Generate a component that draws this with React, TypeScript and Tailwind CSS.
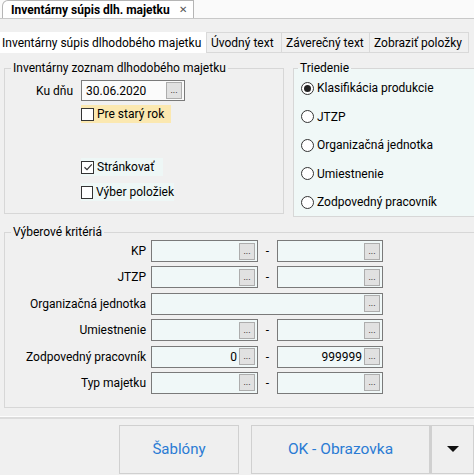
import React from 'react';

const font = { fontFamily: 'Roboto, "Noto Sans", "Liberation Sans", sans-serif' };

const Dots = () => (
    <span className="flex h-[17px] w-[16px] shrink-0 items-end justify-center border border-[#adadad] bg-[#e1e1e1] pb-[3px] text-[9px] leading-none text-black">
        ...
    </span>
);

const Field = ({ width, value, dots = true }: { width: string; value?: string; dots?: boolean }) => (
    <div className={`flex h-[22px] shrink-0 items-center gap-[2px] border border-[#7a7a7a] bg-[#f0f8f8] pl-[4px] pr-[2px] ${width}`}>
        <span className="flex-1 text-right">{value}</span>
        {dots && <Dots />}
    </div>
);

const Check = ({ label, checked, className }: { label: string; checked?: boolean; className: string }) => (
    <div className={`flex h-[18px] items-center gap-[3px] ${className}`}>
        <span className="flex h-[13px] w-[13px] items-center justify-center border border-[#333] bg-white">
            {checked && (
                <svg width="10" height="10" viewBox="0 0 10 10">
                    <path d="M1.5 5.2 L4 7.6 L8.8 2.4" fill="none" stroke="#333" strokeWidth="1.2" />
                </svg>
            )}
        </span>
        <span>{label}</span>
    </div>
);

const Radio = ({ label, checked }: { label: string; checked?: boolean }) => (
    <div className="flex h-[28.5px] items-center gap-[3px]">
        <span className="flex h-[13px] w-[13px] items-center justify-center rounded-full border border-[#333] bg-white">
            {checked && <span className="h-[7px] w-[7px] rounded-full bg-[#222]" />}
        </span>
        <span>{label}</span>
    </div>
);

const rows: { label: string; from?: string; to?: string; wide?: boolean }[] = [
    { label: 'KP' },
    { label: 'JTZP' },
    { label: 'Organizačná jednotka', wide: true },
    { label: 'Umiestnenie' },
    { label: 'Zodpovedný pracovník', from: '0', to: '999999' },
    { label: 'Typ majetku' },
];

export default function App() {
    return (
        <div className="h-[475px] w-[474px] overflow-hidden whitespace-nowrap bg-[#f0f0f0] text-[12px] text-black" style={font}>
            <div className="flex h-[19px] items-end border-b border-[#c8c8c8] bg-[#fafafa]">
                <div className="ml-[2px] flex h-[18px] w-[192px] items-center gap-[9px] rounded-tl-[6px] border-t border-r border-l border-[#b5b5b5] bg-white pl-[8px]">
                    <span className="font-bold">Inventárny súpis dlh. majetku</span>
                    <span className="text-[10px] text-[#555]">✕</span>
                </div>
            </div>

            <div className="mt-[13px] flex h-[21px]">
                <div className="flex w-[206px] items-center bg-white pl-[2px]">Inventárny súpis dlhodobého majetku</div>
                <div className="flex w-[76px] items-center border border-[#d9d9d9] pl-[4px]">Úvodný text</div>
                <div className="flex w-[88px] items-center border-y border-r border-[#d9d9d9] pl-[4px]">Záverečný text</div>
                <div className="flex w-[99px] items-center border-y border-r border-[#d9d9d9] pl-[4px]">Zobraziť položky</div>
            </div>

            <div className="mt-[8px] flex gap-[9px] pl-[4px]">
                <fieldset className="h-[153px] w-[280px] shrink-0 border border-[#d7d7d7] pt-[5px]">
                    <legend className="ml-[6px] px-[2px] leading-[14px]">Inventárny zoznam dlhodobého majetku</legend>
                    <div className="pl-[76px]">
                        <div className="flex items-center">
                            <span className="-ml-[45px] w-[45px]">Ku dňu</span>
                            <div className="flex h-[21px] w-[104px] items-center border border-[#7a7a7a] bg-[#fbfbfb] pl-[4px] pr-[2px]">
                                <span className="flex-1">30.06.2020</span>
                                <Dots />
                            </div>
                        </div>
                        <Check label="Pre starý rok" className="mt-[4px] w-[90px] bg-[#fbe8b0]" />
                        <Check label="Stránkovať" checked className="mt-[35px] w-[82px] bg-[#eef7f6]" />
                        <Check label="Výber položiek" className="mt-[7px] w-[93px] bg-[#eef7f6]" />
                    </div>
                </fieldset>

                <fieldset className="h-[156px] w-[200px] shrink-0 border border-[#d7d7d7] bg-[#f0f8f7]">
                    <legend className="ml-[4px] px-[2px] leading-[14px]">Triedenie</legend>
                    <div className="-mt-[1px] flex flex-col pl-[7px]">
                        <Radio label="Klasifikácia produkcie" checked />
                        <Radio label="JTZP" />
                        <Radio label="Organizačná jednotka" />
                        <Radio label="Umiestnenie" />
                        <Radio label="Zodpovedný pracovník" />
                    </div>
                </fieldset>
            </div>

            <fieldset className="mt-[8px] ml-[4px] h-[183px] w-[480px] border border-[#d7d7d7] pt-[1px]">
                <legend className="ml-[6px] px-[2px] leading-[14px]">Výberové kritériá</legend>
                <div className="flex flex-col gap-[4.4px]">
                    {rows.map((r) => (
                        <div key={r.label} className="flex items-center">
                            <span className="w-[146px] shrink-0 pr-[5px] text-right">{r.label}</span>
                            {r.wide ? (
                                <Field width="w-[232px]" />
                            ) : (
                                <>
                                    <Field width="w-[107px]" value={r.from} />
                                    <span className="w-[19px] shrink-0 text-center">-</span>
                                    <Field width="w-[106px]" value={r.to} />
                                </>
                            )}
                        </div>
                    ))}
                </div>
            </fieldset>

            <div className="mt-[8px] border-t border-[#fdfdfd]">
                <div className="border-t-2 border-[#dcdcdc]" />
            </div>

            <div className="mt-[6px] flex pl-[119px]">
                <button className="h-[49px] w-[120px] shrink-0 border border-[#d0d0d0] bg-[#efefef] text-[15px] text-[#2a7bd4]">Šablóny</button>
                <button className="ml-[12px] h-[49px] w-[179px] shrink-0 border border-[#d0d0d0] bg-[#efefef] text-[15.5px] text-[#2a7bd4]">OK - Obrazovka</button>
                <button className="flex h-[49px] w-[44px] shrink-0 items-center justify-center border border-l-2 border-[#d0d0d0] bg-[#efefef]">
                    <svg width="12" height="7" viewBox="0 0 12 7">
                        <path d="M0 0 H12 L6 6 Z" fill="#111" />
                    </svg>
                </button>
            </div>
        </div>
    );
}
